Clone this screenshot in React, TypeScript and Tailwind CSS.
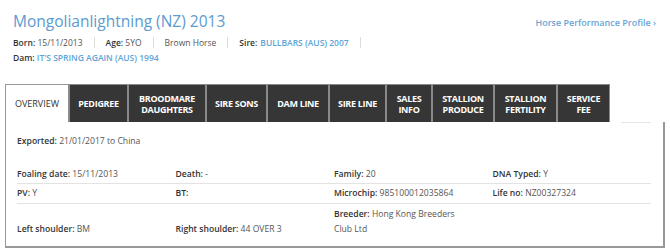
import React from "react"

const tabs = [
  "PEDIGREE",
  "BROODMARE\nDAUGHTERS",
  "SIRE SONS",
  "DAM LINE",
  "SIRE LINE",
  "SALES\nINFO",
  "STALLION\nPRODUCE",
  "STALLION\nFERTILITY",
  "SERVICE\nFEE",
]
const widths = ["w-[59px]", "w-[78px]", "w-[61px]", "w-[62px]", "w-[57px]", "w-[46px]", "w-[62px]", "w-[63px]", "w-[54px]"]

function Field({ label, value }: { label: string; value?: string }) {
  return (
    <div className="text-[#555]">
      <span className="font-semibold text-[#333]">{label}:</span> {value}
    </div>
  )
}

function Sep() {
  return <span className="mx-[11px] h-[11px] w-px bg-[#ddd]" />
}

export default function App() {
  return (
    <div className="w-[670px] h-[252px] bg-white font-['Open_Sans',sans-serif] overflow-hidden">
      <div className="flex items-start justify-between pl-[13px] pr-[14px] pt-[10px]">
        <h1 className="text-[15.5px] leading-[22px] text-[#5b9bd0]">Mongolianlightning (NZ) 2013</h1>
        <a className="mt-[6px] text-[9px] font-semibold text-[#6aa5d4]">Horse Performance Profile ›</a>
      </div>
      <div className="pl-[13px] mt-[3px] text-[8.5px] leading-[15px] text-[#555]">
        <div className="flex items-center">
          <Field label="Born" value="15/11/2013" />
          <Sep />
          <Field label="Age" value="5YO" />
          <Sep />
          <span>Brown Horse</span>
          <Sep />
          <span className="font-semibold text-[#333]">Sire:</span>
          <span className="ml-[3px] font-semibold text-[#5ca5d8]">BULLBARS (AUS) 2007</span>
          <Sep />
        </div>
        <div>
          <span className="font-semibold text-[#333]">Dam:</span>{" "}
          <span className="font-semibold text-[#5ca5d8]">IT'S SPRING AGAIN (AUS) 1994</span>
        </div>
      </div>

      <div className="ml-[5px] mt-[19px] flex h-[38px] text-[9px] leading-[11px]">
        <div className="flex w-[63px] items-center justify-center border-l border-t border-[#999] bg-white text-[#333]">
          OVERVIEW
        </div>
        {tabs.map((t, i) => (
          <div
            key={t}
            className={`${widths[i]} flex items-center justify-center whitespace-pre-line border-l-2 border-t border-[#8a8a8a] bg-[#363636] text-center font-bold tracking-[-0.3px] text-white ${i === tabs.length - 1 ? "border-r" : ""}`}
          >
            {t}
          </div>
        ))}
        <div className="flex-1" />
      </div>

      <div className="ml-[5px] mr-[5px] h-[126px] border-b-2 border-l border-r-2 border-[#999] bg-white pl-[11px] pr-[12px] text-[8.6px]">
        <div className="flex h-[1px]">
          <div className="w-[604px]" />
          <div className="flex-1 bg-[#e5e5e5]" />
        </div>
        <div className="pt-[11px] pb-[19px] leading-[14px]">
          <Field label="Exported" value="21/01/2017 to China" />
        </div>
        <div className="grid grid-cols-4 border-b border-[#e3e3e3] pb-[2px] leading-[14px]">
          <Field label="Foaling date" value="15/11/2013" />
          <Field label="Death" value="-" />
          <Field label="Family" value="20" />
          <Field label="DNA Typed" value="Y" />
        </div>
        <div className="grid grid-cols-4 border-b border-[#e3e3e3] pt-[2px] pb-[3px] leading-[14px]">
          <Field label="PV" value="Y" />
          <Field label="BT" value="" />
          <Field label="Microchip" value="985100012035864" />
          <Field label="Life no" value="NZ00327324" />
        </div>
        <div className="grid grid-cols-4 items-end pt-[3px] leading-[15px]">
          <Field label="Left shoulder" value="BM" />
          <Field label="Right shoulder" value="44 OVER 3" />
          <div className="text-[#555]">
            <div>
              <span className="font-semibold text-[#333]">Breeder:</span> Hong Kong Breeders
            </div>
            <div>Club Ltd</div>
          </div>
          <div />
        </div>
      </div>
    </div>
  )
}
